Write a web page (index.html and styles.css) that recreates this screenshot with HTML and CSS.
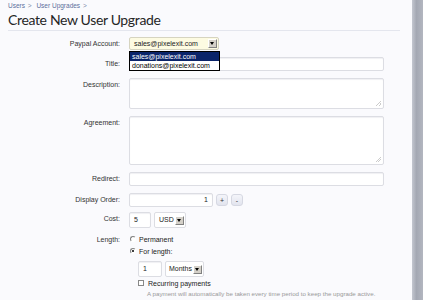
FILE: index.html
```html
<!DOCTYPE html>
<html lang="en">
<head>
    <meta charset="UTF-8">
    <meta name="viewport" content="width=device-width, initial-scale=1.0">
    <title>Create New User Upgrade</title>
    <link rel="stylesheet" href="styles.css">
</head>
<body>
    <div class="page">
        <main class="content">
            <nav class="breadcrumb">
                <a href="#">Users</a> &gt;
                <a href="#">User Upgrades</a> &gt;
            </nav>
            <h1 class="title">Create New User Upgrade</h1>

            <form class="upgrade-form">
                <div class="row">
                    <label class="row-label">Paypal Account:</label>
                    <div class="row-control">
                        <div class="select select-paypal">
                            <span class="select-text">sales@pixelexit.com</span>
                            <span class="select-arrow"></span>
                        </div>
                        <ul class="dropdown">
                            <li class="selected">sales@pixelexit.com</li>
                            <li>donations@pixelexit.com</li>
                        </ul>
                    </div>
                </div>

                <div class="row">
                    <label class="row-label">Title:</label>
                    <div class="row-control"><div class="input input-wide"></div></div>
                </div>

                <div class="row">
                    <label class="row-label">Description:</label>
                    <div class="row-control"><div class="input textarea textarea-desc"><span class="grip"></span></div></div>
                </div>

                <div class="row">
                    <label class="row-label">Agreement:</label>
                    <div class="row-control"><div class="input textarea textarea-agree"><span class="grip"></span></div></div>
                </div>

                <div class="row">
                    <label class="row-label">Redirect:</label>
                    <div class="row-control"><div class="input input-wide"></div></div>
                </div>

                <div class="row">
                    <label class="row-label">Display Order:</label>
                    <div class="row-control inline">
                        <div class="input input-order">1</div>
                        <button type="button" class="spin">+</button>
                        <button type="button" class="spin">-</button>
                    </div>
                </div>

                <div class="row row-cost">
                    <label class="row-label">Cost:</label>
                    <div class="row-control inline">
                        <div class="input input-cost">5</div>
                        <div class="select select-currency">
                            <span class="select-text">USD</span>
                            <span class="select-arrow"></span>
                        </div>
                    </div>
                </div>

                <div class="row row-length">
                    <label class="row-label">Length:</label>
                    <div class="row-control">
                        <div class="choice"><span class="radio"></span>Permanent</div>
                        <div class="choice"><span class="radio checked"></span>For length:</div>
                        <div class="inline length-inputs">
                            <div class="input input-length">1</div>
                            <div class="select select-unit">
                                <span class="select-text">Months</span>
                                <span class="select-arrow"></span>
                            </div>
                        </div>
                        <div class="choice recurring"><span class="checkbox"></span>Recurring payments</div>
                        <p class="hint">A payment will automatically be taken every time period to keep the upgrade active.</p>
                    </div>
                </div>
            </form>
        </main>
        <div class="scroll-edge"></div>
    </div>
</body>
</html>
```

FILE: styles.css
```css
* {
    box-sizing: border-box;
}
body {
    margin: 0;
    padding: 0;
    background: #fafafd;
    font-family: "Liberation Sans", Arial, sans-serif;
    color: #333;
}
.page {
    display: flex;
    height: 300px;
    overflow: hidden;
}
.content {
    flex: 1;
    padding: 2px 12px 0 8px;
}
.scroll-edge {
    width: 11px;
    background: linear-gradient(to right, #c4c7d0, #a4a8b3 40%, #b3b6c0);
}

.breadcrumb {
    font-size: 6.5px;
    color: #7a88a8;
    line-height: 8px;
}
.breadcrumb a {
    color: #5b6f9c;
    text-decoration: none;
    margin-right: 1px;
}
.breadcrumb a + a {
    margin-left: 3px;
}
.title {
    margin: 2px 0 0;
    padding-bottom: 2px;
    font-family: Lato, "Liberation Sans", sans-serif;
    font-size: 14px;
    letter-spacing: -0.35px;
    font-weight: normal;
    color: #262626;
    line-height: 16px;
    border-bottom: 1px solid #e4e6ee;
}

.upgrade-form {
    margin-top: 6px;
    display: flex;
    flex-direction: column;
    gap: 7px;
}
.row {
    display: flex;
    align-items: flex-start;
}
.row-label {
    width: 112px;
    flex-shrink: 0;
    text-align: right;
    font-size: 7px;
    line-height: 13px;
    color: #333;
}
.row-control {
    position: relative;
    margin-left: 9px;
    font-size: 7px;
    line-height: 10px;
}
.inline {
    display: flex;
    align-items: center;
    gap: 3px;
}

.input {
    height: 14px;
    background: #fff;
    border: 1px solid #dcdde3;
    border-radius: 2px;
    box-shadow: inset 0 1px 1px #f0f0f3;
    font-size: 7px;
    line-height: 12px;
    padding: 0 4px;
    color: #222;
}
.input-wide {
    width: 255px;
}
.textarea {
    position: relative;
    width: 255px;
}
.textarea-desc {
    height: 31px;
}
.textarea-agree {
    height: 49px;
}
.grip {
    position: absolute;
    right: 2px;
    bottom: 2px;
    width: 5px;
    height: 5px;
    background: linear-gradient(135deg, transparent 45%, #ccc 45%, #ccc 55%, transparent 55%, transparent 70%, #ccc 70%, #ccc 80%, transparent 80%);
}
.input-order {
    width: 84px;
    text-align: right;
}
.row-cost {
    margin-top: -2px;
}
.input-cost {
    width: 22px;
    height: 16px;
    line-height: 14px;
}
.input-length {
    width: 24px;
    height: 16px;
    line-height: 14px;
}

.spin {
    width: 12px;
    height: 12px;
    padding: 0;
    border: 1px solid #d6d8e2;
    border-radius: 3px;
    background: linear-gradient(#f4f5fa, #e2e4ee);
    font-size: 7px;
    line-height: 9px;
    color: #333;
    font-family: inherit;
}

.select {
    display: flex;
    align-items: center;
    height: 13px;
    padding: 0 1px 0 4px;
    background: #fff;
    border: 1px solid #dcdde3;
    border-radius: 2px;
    font-size: 7px;
    color: #222;
}
.select-text {
    flex: 1;
}
.select-arrow {
    position: relative;
    width: 9px;
    height: 9px;
    background: #d4d0c8;
    border: 1px solid;
    border-color: #fff #808080 #808080 #fff;
}
.select-arrow::after {
    content: "";
    position: absolute;
    left: 1px;
    top: 2px;
    border-left: 2.5px solid transparent;
    border-right: 2.5px solid transparent;
    border-top: 3px solid #000;
}
.select-paypal {
    width: 90px;
    background: #fdfbe2;
    border-color: #d6d4c0;
}
.select-currency {
    width: 32px;
    height: 16px;
}
.select-unit {
    width: 39px;
    height: 16px;
    padding-left: 3px;
}

.dropdown {
    position: absolute;
    left: 0;
    top: 14px;
    width: 91px;
    margin: 0;
    padding: 0;
    list-style: none;
    background: #fff;
    border: 1px solid #000;
    font-size: 7px;
    line-height: 9px;
    z-index: 2;
}
.dropdown li {
    padding: 0 2px;
    color: #000;
}
.dropdown li.selected {
    background: #0a246a;
    color: #fff;
}

.row-cost + .row-length {
    margin-top: -1px;
}
.row-length .row-label {
    line-height: 12px;
}
.choice {
    display: flex;
    align-items: center;
    height: 12px;
    font-size: 7px;
    color: #222;
}
.radio {
    position: relative;
    width: 6px;
    height: 6px;
    margin: 0 3px 3px 1px;
    border-radius: 50%;
    border: 1px solid;
    border-color: #808080 #fff #fff #808080;
    background: #fff;
}
.radio.checked::after {
    content: "";
    position: absolute;
    left: 1px;
    top: 1px;
    width: 2px;
    height: 2px;
    border-radius: 50%;
    background: #000;
}
.length-inputs {
    margin: 3px 0 1px 9px;
}
.recurring {
    margin-left: 9px;
}
.checkbox {
    width: 6px;
    height: 6px;
    margin: 0 4px 3px 0;
    border: 1px solid #888;
    background: #fff;
}
.hint {
    margin: 0 0 0 18px;
    font-size: 6.2px;
    color: #999;
    line-height: 8px;
    white-space: nowrap;
}
```
